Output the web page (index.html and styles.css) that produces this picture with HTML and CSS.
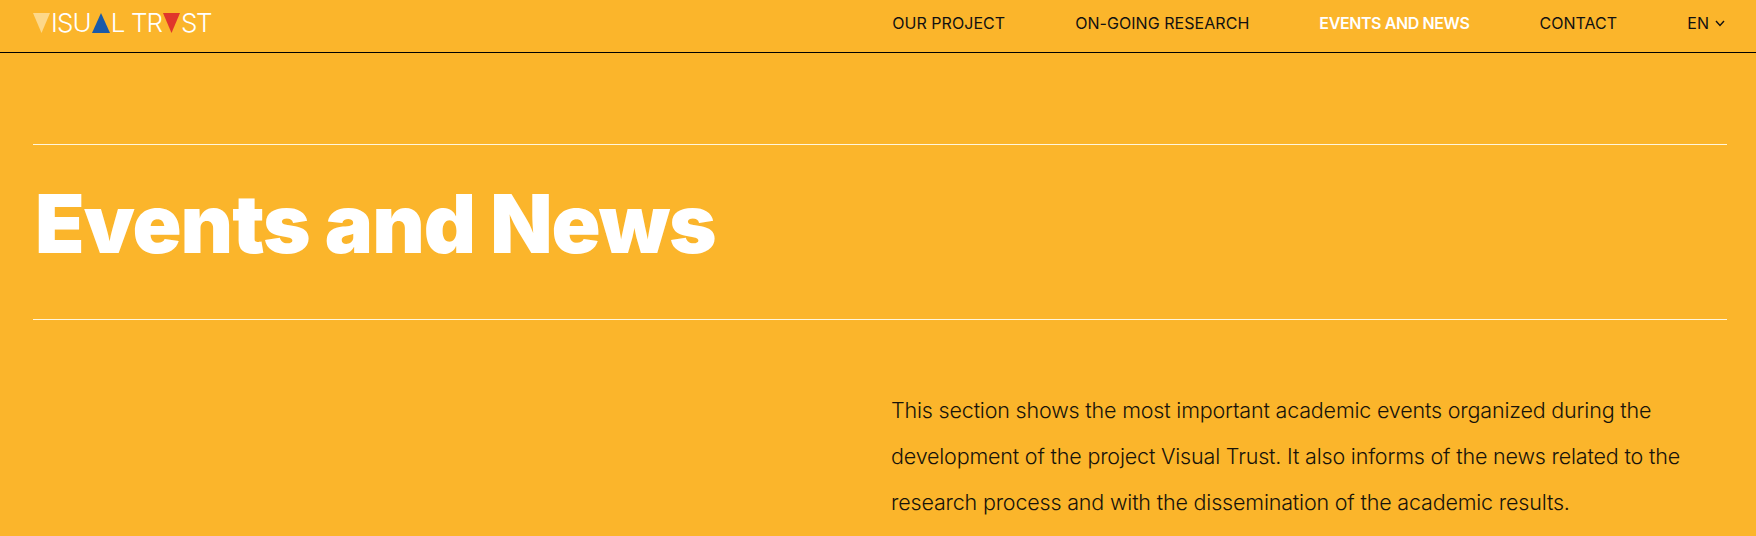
FILE: index.html
```html
<!DOCTYPE html>
<html lang="en">
<head>
  <meta charset="UTF-8">
  <meta name="viewport" content="width=device-width, initial-scale=1.0">
  <title>Events and News - Visual Trust</title>
  <link rel="stylesheet" href="styles.css">
</head>
<body>
  <header class="topbar">
    <a class="logo" href="#" aria-label="Visual Trust">
      <svg class="tri tri-first" viewBox="0 0 17 20"><polygon points="0,0 17,0 8.5,20" fill="#fdd88a"/></svg>
      <span>ISU</span>
      <svg class="tri tri-blue" viewBox="0 0 18 20"><polygon points="9,0 18,20 0,20" fill="#1a5aa8"/></svg>
      <span>L TR</span>
      <svg class="tri tri-red" viewBox="0 0 17 20"><polygon points="0,0 17,0 8.5,20" fill="#e0352b"/></svg>
      <span class="logo-end">ST</span>
    </a>
    <nav class="nav">
      <a href="#">OUR PROJECT</a>
      <a href="#">ON-GOING RESEARCH</a>
      <a href="#" class="active">EVENTS AND NEWS</a>
      <a href="#">CONTACT</a>
      <a href="#" class="lang">EN
        <svg viewBox="0 0 10 7" class="chevron"><path d="M1 1l4 4.5L9 1" fill="none" stroke="#111" stroke-width="1.4"/></svg>
      </a>
    </nav>
  </header>

  <main class="content">
    <section class="title-block">
      <h1>Events and News</h1>
    </section>
    <section class="intro">
      <p>This section shows the most important academic events organized during the development of the project Visual Trust. It also informs of the news related to the research process and with the dissemination of the academic results.</p>
    </section>
  </main>
</body>
</html>
```

FILE: styles.css
```css
* {
  box-sizing: border-box;
}

html,
body {
  height: 100%;
}

body {
  margin: 0;
  overflow: hidden;
  font-family: Inter, "Liberation Sans", sans-serif;
  background: #fbb52b;
  color: #17130a;
}

a {
  color: inherit;
  text-decoration: none;
}

.topbar {
  display: flex;
  justify-content: space-between;
  align-items: center;
  height: 53px;
  padding: 0 31px 6px 33px;
  border-bottom: 1px solid #000;
}

.logo {
  display: flex;
  align-items: center;
  gap: 1px;
  color: #fff;
  font-size: 26px;
  font-weight: 300;
  line-height: 20px;
  letter-spacing: -0.9px;
}

.logo-end {
  letter-spacing: -1.6px;
}

.tri {
  height: 20px;
  flex: none;
}

.tri-first {
  width: 17px;
}

.tri-blue {
  width: 18px;
}

.tri-red {
  width: 17px;
}

.nav {
  display: flex;
  align-items: center;
  gap: 70px;
  font-size: 16px;
  letter-spacing: 0.05px;
  color: #111;
}

.nav .active {
  color: #fff;
  font-weight: 600;
  letter-spacing: -0.4px;
}

.lang {
  display: flex;
  align-items: center;
  gap: 6px;
}

.chevron {
  width: 10px;
  height: 7px;
}

.content {
  padding: 91px 29px 0 33px;
}

.title-block {
  height: 176px;
  padding: 0 0 15px 2px;
  border-top: 1px solid #fff6dc;
  border-bottom: 1px solid #fff6dc;
  display: flex;
  align-items: center;
}

h1 {
  margin: 0;
  font-size: 81px;
  font-weight: 900;
  line-height: 1;
  color: #fff;
  letter-spacing: -1px;
}

.intro {
  margin: 67px 0 0 858px;
  max-width: 830px;
}

.intro p {
  margin: 0;
  font-size: 21.5px;
  font-weight: 300;
  line-height: 46px;
  letter-spacing: -0.18px;
}
```
